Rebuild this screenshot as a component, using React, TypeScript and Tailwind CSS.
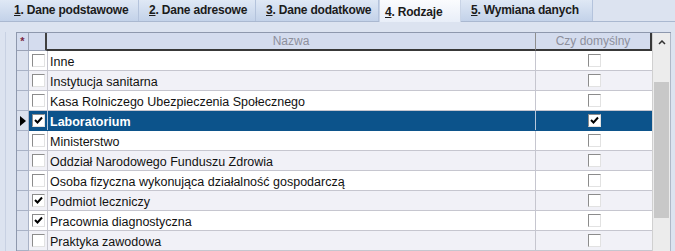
const tabs = [
  { n: '1', label: '. Dane podstawowe', w: 'w-[135px]' },
  { n: '2', label: '. Dane adresowe', w: 'w-[117px]' },
  { n: '3', label: '. Dane dodatkowe', w: 'w-[123px]' },
  { n: '4', label: '. Rodzaje', w: 'w-[82px]', active: true },
  { n: '5', label: '. Wymiana danych', w: 'w-[132px]' },
];

const rows = [
  { name: 'Inne' },
  { name: 'Instytucja sanitarna' },
  { name: 'Kasa Rolniczego Ubezpieczenia Społecznego' },
  { name: 'Laboratorium', checked: true, def: true, selected: true },
  { name: 'Ministerstwo' },
  { name: 'Oddział Narodowego Funduszu Zdrowia' },
  { name: 'Osoba fizyczna wykonująca działalność gospodarczą' },
  { name: 'Podmiot leczniczy', checked: true },
  { name: 'Pracownia diagnostyczna', checked: true },
  { name: 'Praktyka zawodowa' },
];

function Check({ on }: { on?: boolean }) {
  return (
    <div className="w-[13px] h-[13px] bg-white border border-t-[#8c8c8c] border-l-[#8c8c8c] border-r-[#e2e2e2] border-b-[#e2e2e2] flex items-center justify-center">
      {on && (
        <svg width="9" height="9" viewBox="0 0 9 9">
          <path d="M1 4 L3.5 6.5 L8 1.5" stroke="#000" strokeWidth="2" fill="none" />
        </svg>
      )}
    </div>
  );
}

export default function App() {
  return (
    <div
      className="w-[675px] h-[251px] overflow-hidden bg-[#dce3f0] flex flex-col"
      style={{ fontFamily: '"Liberation Sans", Arial, sans-serif' }}
    >
      {/* Tabs */}
      <div className="h-[22px] flex items-end border-b border-[#aab8d0] bg-[#dce3f0] shrink-0">
        <div className="w-[4px] h-full bg-gradient-to-b from-[#dfe8f5] to-[#c3d2e9]" />
        {tabs.map((t) =>
          t.active ? (
            <div
              key={t.n}
              className={`${t.w} h-[22px] -mb-px bg-gradient-to-b from-[#fbfcfe] to-[#e8eef8] text-[12px] tracking-[-0.2px] font-bold text-[#1b1b1b] pl-[5px] pt-[6px] leading-none whitespace-nowrap border-x border-[#c9d4e6]`}
            >
              <span className="underline">{t.n}</span>
              {t.label}
            </div>
          ) : (
            <div
              key={t.n}
              className={`${t.w} h-full bg-gradient-to-b from-[#dfe8f5] to-[#c3d2e9] border-r border-[#b4c3dc] text-[12px] tracking-[-0.2px] font-bold text-[#1b1b1b] pl-[10px] pt-[4px] leading-none whitespace-nowrap`}
            >
              <span className="underline">{t.n}</span>
              {t.label}
            </div>
          )
        )}
      </div>

      {/* Grid area */}
      <div className="flex-1 flex pt-[10px] pl-[5px]">
        <div className="w-[11px] border-l border-[#c8d1e3]" />
        <div className="flex-1 flex border-t border-l border-[#8e98ad] bg-white">
          <div className="flex-1 flex flex-col text-[12.5px]">
            {/* Header */}
            <div className="h-[18px] flex bg-[#d4dcee] text-[12px] text-[#8d8f9c] shrink-0">
              <div className="w-[12px] border-r border-b border-[#9aa2b6] flex items-center justify-center text-[#7b2845] text-[11px] font-bold">
                *
              </div>
              <div className="w-[18px] border-r-2 border-b border-r-[#404040] border-b-[#9aa2b6]" />
              <div className="flex-1 border-r border-b-2 border-r-[#8e8e8e] border-b-[#383838] flex items-center justify-center">
                Nazwa
              </div>
              <div className="w-[116px] border-r-2 border-b-2 border-[#383838] flex items-center justify-center">
                Czy domyślny
              </div>
            </div>
            {/* Rows */}
            {rows.map((r, i) => (
              <div key={r.name} className="h-[20px] flex shrink-0">
                <div className="w-[12px] bg-[#dbe1ee] border-r border-b border-[#a9b2c6] flex items-center justify-center">
                  {r.selected && (
                    <svg width="6" height="10" viewBox="0 0 6 10">
                      <path d="M0 0 L6 5 L0 10 Z" fill="#000" />
                    </svg>
                  )}
                </div>
                <div
                  className={`flex-1 flex border-b ${
                    r.selected
                      ? 'bg-[#0c538b] border-[#0c538b]'
                      : i % 2
                      ? 'bg-[#f1f1f7] border-[#c6c6cf]'
                      : 'bg-white border-[#c6c6cf]'
                  }`}
                >
                  <div className={`w-[19px] border-r ${r.selected ? 'border-[#b9c8dc]' : 'border-[#c6c6cf]'} flex items-center justify-center`}>
                    <Check on={r.checked} />
                  </div>
                  <div
                    className={`flex-1 pl-[2px] pt-[4px] flex items-center whitespace-nowrap border-r ${
                      r.selected ? 'text-white font-bold border-[#b9c8dc]' : 'text-[#111] border-[#c6c6cf]'
                    }`}
                  >
                    {r.name}
                  </div>
                  <div className="w-[116px] flex items-center justify-center">
                    <Check on={r.def} />
                  </div>
                </div>
              </div>
            ))}
          </div>
          {/* Scrollbar */}
          <div className="w-[19px] bg-[#ececec] flex flex-col border-l border-[#d0d0d0] border-r border-r-[#b0b8c8]">
            <div className="h-[18px] flex items-center justify-center">
              <svg width="8" height="5" viewBox="0 0 8 5">
                <path d="M1 4 L4 1 L7 4" stroke="#333" strokeWidth="1.5" fill="none" />
              </svg>
            </div>
            <div className="h-[31px]" />
            <div className="h-[136px] mx-[1px] bg-[#c8c8c8]" />
          </div>
        </div>
        <div className="w-[4px]" />
      </div>
    </div>
  );
}
